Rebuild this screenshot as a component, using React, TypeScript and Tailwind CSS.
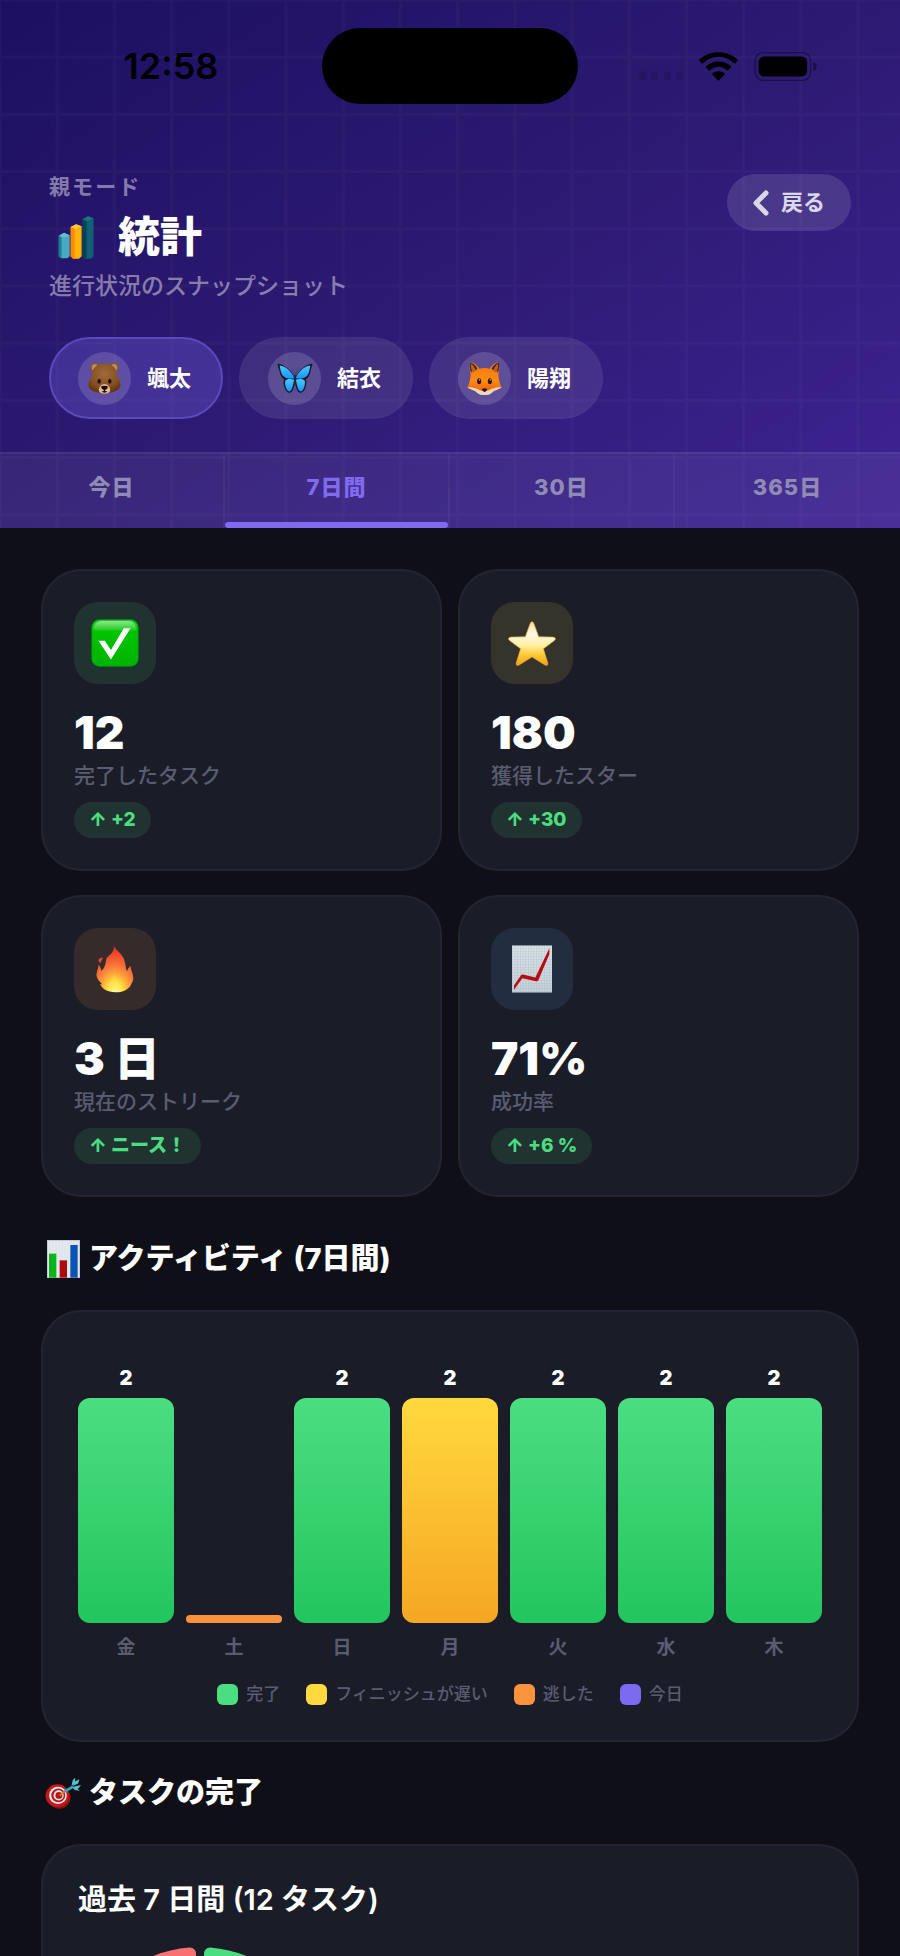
import React, { ReactNode, useState } from "react";

const Wifi = () => (
  <svg viewBox="0 0 117 86" className="h-[29px] w-[39px]" aria-hidden="true">
    <path d="M58.5 0C36 0 16 8 1 22q-2 2 0 4l7 7q2 2 4 0C25 21 41 14 58.5 14S92 21 105 33q2 2 4 0l7-7q2-2 0-4C101 8 81 0 58.5 0z" />
    <path d="M58.5 28C44 28 31 33 21 42q-2 2 0 4l8 8q2 2 4 0c7-6 16-10 25.500-10S77 48 84 54q2 2 4 0l8-8q2-2 0-4C86 33 73 28 58.5 28z" />
    <path d="M58.5 57c-7 0-13 2-17.500 6-2 2-2 3 0 5l15.500 16q2 2 4 0L76 68c2-2 2-3 0-5-4.500-4-10.500-6-17.500-6z" />
  </svg>
);

const Battery = () => (
  <svg viewBox="0 0 192 88" className="h-[29px] w-16" aria-hidden="true">
    <rect x="2" y="2" width="169" height="84" rx="25" fill="none" stroke="#000" strokeOpacity="0.4" strokeWidth="4" />
    <rect x="13" y="14" width="147" height="60" rx="16" />
    <path d="M179 30c6 2 10 8 10 14s-4 12-10 14z" fillOpacity="0.45" />
  </svg>
);

const Bars3d = () => (
  <svg viewBox="0 0 108 130" className="h-[43px] w-9" aria-hidden="true">
    <path d="M2 60l16-9 17 7v64l-7 6H8l-6-6z" fill="#49a8c4" />
    <path d="M2 60l8 4v64H8l-6-6z" fill="#16808c" />
    <path d="M2 60l16-9 17 7-15 8z" fill="#5fbcd2" />
    <path d="M38 33l16-8 17 6v91l-8 7H45l-7-7z" fill="#ffb30a" />
    <path d="M38 33l12 4v92h-5l-7-7z" fill="#fb8a06" />
    <path d="M38 33l16-8 17 6-19 8z" fill="#ffc53a" />
    <path d="M74 10l16-9 17 6v115l-8 7H81l-7-7z" fill="#126078" />
    <path d="M74 10l12 4v115h-5l-7-7z" fill="#0a4350" />
    <path d="M74 10l16-9 17 6-20 9z" fill="#1c7484" />
  </svg>
);

const Bear = () => (
  <svg viewBox="0 0 98 96" className="h-8 w-[33px]" aria-hidden="true">
    <defs>
      <radialGradient id="bear" cx="50%" cy="35%" r="65%">
        <stop offset="0" stopColor="#a06a3a" />
        <stop offset="0.7" stopColor="#855021" />
        <stop offset="1" stopColor="#643613" />
      </radialGradient>
    </defs>
    <circle cx="20" cy="16" r="14" fill="#8a5528" />
    <circle cx="78" cy="16" r="14" fill="#8a5528" />
    <circle cx="21" cy="17" r="10" fill="#c08f62" />
    <circle cx="77" cy="17" r="10" fill="#c08f62" />
    <path d="M49 4c23 0 36 14 38 33 1 10 10 20 10 31 0 17-21 25-48 25S1 85 1 68c0-11 9-21 10-31C13 18 26 4 49 4z" fill="url(#bear)" />
    <path d="M49 66c9 0 17 9 17 18 0 7-7 11-17 11s-17-4-17-11c0-9 8-18 17-18z" fill="#e3bd8a" />
    <ellipse cx="33" cy="58" rx="5" ry="7" fill="#1b0e06" />
    <ellipse cx="65" cy="58" rx="5" ry="7" fill="#1b0e06" />
    <path d="M39 75q0-4 10-4t10 4q0 6-8 9v3q4 2 7 0-3 5-9 5t-9-5q3 2 7 0v-3q-8-3-8-9z" fill="#180d0a" />
  </svg>
);

const Butterfly = () => (
  <svg viewBox="0 0 108 92" className="h-[31px] w-9" aria-hidden="true">
    <defs>
      <linearGradient id="wing" x1="0" y1="0" x2="0" y2="1">
        <stop offset="0" stopColor="#4fc6fc" />
        <stop offset="1" stopColor="#1496f4" />
      </linearGradient>
    </defs>
    <path d="M53 44C44 22 24 5 3 2c-3 1 2 12 4 20 3 14 6 22 15 27-3 5-3 10-1 18 2 10 6 20 16 22 8 0 13-12 16-26z" fill="#10192c" />
    <path d="M52 45C44 25 26 9 8 7c2 11 3 18 6 25 4 9 11 13 25 15z" fill="url(#wing)" />
    <path d="M51 49c-11-3-22-2-26 3-2 8 0 17 3 24 3 7 7 10 10 9 7-4 11-18 13-36z" fill="url(#wing)" />
    <path d="M55 44C64 22 84 5 105 2c3 1-2 12-4 20-3 14-6 22-15 27 3 5 3 10 1 18-2 10-6 20-16 22-8 0-13-12-16-26z" fill="#10192c" />
    <path d="M56 45C64 25 82 9 100 7c-2 11-3 18-6 25-4 9-11 13-25 15z" fill="url(#wing)" />
    <path d="M57 49c11-3 22-2 26 3 2 8 0 17-3 24-3 7-7 10-10 9-7-4-11-18-13-36z" fill="url(#wing)" />
    <path d="M53 34L45 12M55 34l8-22" stroke="#39405a" strokeWidth="1.5" />
    <ellipse cx="54" cy="49" rx="3" ry="16" fill="#1d2638" />
  </svg>
);

const Fox = () => (
  <svg viewBox="0 0 104 98" className="h-[33px] w-[35px]" aria-hidden="true">
    <defs>
      <linearGradient id="fox" x1="0" y1="0" x2="0" y2="1">
        <stop offset="0" stopColor="#ee7410" />
        <stop offset="0.55" stopColor="#ff8c0f" />
        <stop offset="1" stopColor="#e8560c" />
      </linearGradient>
    </defs>
    <path d="M11 0c11 3 20 10 26 20 9-3 21-3 30 0C73 10 82 3 93 0c4 13 4 26 0 37 1 14 4 27 10 39-9 6-22 8-29 15-6 7-14 7-22 7s-16 0-22-7C23 84 10 82 1 76c6-12 9-25 10-39C7 26 7 13 11 0z" fill="url(#fox)" />
    <path d="M10 1c9 4 16 10 21 19l-6 5C21 15 16 8 12 6c0 6 1 12 3 19l-3 8C8 22 8 11 10 1zM94 1c-9 4-16 10-21 19l6 5c4-10 9-17 13-19 0 6-1 12-3 19l3 8c4-11 4-22 2-32z" fill="#43291b" />
    <path d="M13 8c6 3 10 10 13 17l-9 7c-4-9-4-16-4-24zM91 8c-6 3-10 10-13 17l9 7c4-9 4-16 4-24z" fill="#b8602c" />
    <path d="M1 76c13-3 26 2 38 8 6 3 20 3 26 0 12-6 25-11 38-8-9 6-22 8-29 15-6 7-14 7-22 7s-16 0-22-7C23 84 10 82 1 76z" fill="#ead8c4" />
    <ellipse cx="36" cy="57" rx="6" ry="9" fill="#2a1008" />
    <ellipse cx="68" cy="57" rx="6" ry="9" fill="#2a1008" />
    <circle cx="37" cy="53" r="2" fill="#fff" />
    <circle cx="69" cy="53" r="2" fill="#fff" />
    <path d="M44 80q8-4 16 0-1 7-8 9-7-2-8-9z" fill="#2b1711" />
  </svg>
);

const Check = () => (
  <svg viewBox="0 0 142 142" className="size-12" aria-hidden="true">
    <defs>
      <linearGradient id="chk" x1="0" y1="0" x2="0" y2="1">
        <stop offset="0" stopColor="#2fd02f" />
        <stop offset="0.25" stopColor="#00c400" />
        <stop offset="1" stopColor="#00b400" />
      </linearGradient>
      <linearGradient id="gloss" x1="0" y1="0" x2="0" y2="1">
        <stop offset="0" stopColor="#8ce88c" />
        <stop offset="1" stopColor="#1fca1f" />
      </linearGradient>
    </defs>
    <rect x="1" y="1" width="140" height="140" rx="24" fill="#069a0b" />
    <rect x="4" y="4" width="134" height="134" rx="22" fill="url(#chk)" />
    <path d="M8 30Q10 6 34 6h74q24 0 26 24-2 4-14 4H22q-12 0-14-4z" fill="url(#gloss)" />
    <path d="M22 64h19l18 28 38-65h20L59 120z" fill="#fff" />
  </svg>
);

const Star = () => (
  <svg viewBox="0 0 142 134" className="h-[45px] w-12" aria-hidden="true">
    <defs>
      <linearGradient id="star" x1="0" y1="0" x2="0" y2="1">
        <stop offset="0" stopColor="#ffdf9a" />
        <stop offset="0.3" stopColor="#fff8e4" />
        <stop offset="0.55" stopColor="#fff0a0" />
        <stop offset="0.75" stopColor="#fdcb35" />
        <stop offset="1" stopColor="#f4a012" />
      </linearGradient>
    </defs>
    <path d="M71 2q4 0 6 7l14 38 42 1q7 1 8 5 0 3-6 7l-30 23 13 42q1 5-2 7-3 1-8-2l-37-23-37 23q-5 3-8 2-3-2-2-7l13-42L7 60q-6-4-6-7 1-4 8-5l42-1 14-38q2-7 6-7z" fill="url(#star)" stroke="#eaa044" strokeWidth="2" />
  </svg>
);

const Fire = () => (
  <svg viewBox="0 0 114 142" className="h-12 w-[38px]" aria-hidden="true">
    <defs>
      <radialGradient id="fire" cx="50%" cy="98%" r="88%">
        <stop offset="0" stopColor="#fffbb4" />
        <stop offset="0.2" stopColor="#ffe94a" />
        <stop offset="0.42" stopColor="#ffa93a" />
        <stop offset="0.66" stopColor="#f9713c" />
        <stop offset="1" stopColor="#ee3a24" />
      </radialGradient>
    </defs>
    <path d="M53 1c5 12 24 22 31 40 5 13 4 26 9 37 2-5 3-10 11-17-1 12 8 22 8 38 0 8-4 13-7 19-5 12-20 22-46 23-27-1-42-12-47-25 3 1 5 1 7 1C5 104 0 95 2 84c1-10 5-15 6-26 6 6 7 13 8 19 9-9 13-18 14-33C33 29 58 24 53 1z" fill="url(#fire)" />
    <path d="M18 36c5 6-3 9-4 17-8-4-8-10-4-13 3-1 6-2 8-4z" fill="#ee4530" />
    <path d="M56 82c-3 14-15 24-15 38 0 10 6 17 17 17 12 0 17-8 15-20-2-6-5-7-6-15-5 1-9-8-11-20z" fill="#ffe14a" fillOpacity="0.4" />
  </svg>
);

const Trend = () => (
  <svg viewBox="0 0 120 141" className="h-12 w-10" aria-hidden="true">
    <defs>
      <linearGradient id="sheet" x1="0" y1="0" x2="0" y2="1">
        <stop offset="0" stopColor="#dce4ea" />
        <stop offset="1" stopColor="#c6d0d8" />
      </linearGradient>
      <pattern id="paper" width="8" height="8" patternUnits="userSpaceOnUse">
        <path d="M0 0h8M0 0v8" stroke="#9fadb9" strokeWidth="1.5" />
      </pattern>
    </defs>
    <rect width="120" height="141" fill="url(#sheet)" />
    <rect width="120" height="141" fill="url(#paper)" />
    <path d="M6 120l22-32q2-2 5-1l37 9L112 8v18L79 104q-2 4-7 3l-41-9L6 133z" fill="#b40d12" />
  </svg>
);

const BarChart = () => (
  <svg viewBox="0 0 99 114" className="h-[38px] w-[33px]" aria-hidden="true">
    <rect width="99" height="114" fill="#e3e9ef" />
    <path d="M9 0v114M18 0v114M27 0v114M36 0v114M45 0v114M54 0v114M63 0v114M72 0v114M81 0v114M90 0v114" stroke="#cdd6de" strokeWidth="1" />
    <rect x="1" y="1" width="97" height="112" fill="none" stroke="#b3bdc6" strokeWidth="2" />
    <rect x="6" y="41" width="22" height="72" fill="#0ab41c" />
    <rect x="38" y="61" width="22" height="52" fill="#ac0c10" />
    <rect x="70" y="15" width="22" height="98" fill="#0a55b4" />
  </svg>
);

const Target = () => (
  <svg viewBox="0 0 114 100" className="h-[33px] w-[38px]" aria-hidden="true">
    <ellipse cx="44" cy="61" rx="36" ry="38" fill="#8f1115" transform="rotate(-35 44 61)" />
    <ellipse cx="39" cy="57" rx="37" ry="36" fill="#c8171b" />
    <ellipse cx="41" cy="56" rx="28" ry="27" fill="#f4ecec" />
    <ellipse cx="42" cy="56" rx="22" ry="22" fill="#b9151a" />
    <ellipse cx="43" cy="56" rx="16" ry="16" fill="#f4ecec" />
    <ellipse cx="44" cy="56" rx="11" ry="11" fill="#b9151a" />
    <path d="M48 55l14-11" stroke="#c98a1b" strokeWidth="5" strokeLinecap="round" />
    <path d="M59 41l28-17 5 8-27 15q-8 1-6-6z" fill="#2ba7bf" />
    <path d="M84 25l4-18 8-7-2 18zM88 26l6-14 15-7-4 13zM90 29l24-6-9 12-15-2zM88 31l14 3 8 8-17-4z" fill="#55bfd0" />
  </svg>
);

interface Child {
  name: string;
  avatar: ReactNode;
}

const kids: Child[] = [
  { name: "颯太", avatar: <Bear /> },
  { name: "結衣", avatar: <Butterfly /> },
  { name: "陽翔", avatar: <Fox /> },
];

const periods = ["今日", "7日間", "30日", "365日"];

interface StatCardProps {
  icon: ReactNode;
  iconClass: string;
  value: string;
  label: string;
  delta: string;
}

const stats: StatCardProps[] = [
  { icon: <Check />, iconClass: "bg-[#203330]", value: "12", label: "完了したタスク", delta: "+2" },
  { icon: <Star />, iconClass: "bg-[#35342a]", value: "180", label: "獲得したスター", delta: "+30" },
  { icon: <Fire />, iconClass: "bg-[#352b2a]", value: "3 日", label: "現在のストリーク", delta: "ニース！" },
  { icon: <Trend />, iconClass: "bg-[#222e40]", value: "71%", label: "成功率", delta: "+6 %" },
];

const barColors = {
  done: "bg-linear-to-b from-[#4ade80] to-[#22c55e]",
  late: "bg-linear-to-b from-[#ffd93d] to-[#f5a623]",
  missed: "bg-[#fb923c]",
};

type DayType = {
  day: string;
  count: number;
  status: keyof typeof barColors;
};

const days: DayType[] = [
  { day: "金", count: 2, status: "done" },
  { day: "土", count: 0, status: "missed" },
  { day: "日", count: 2, status: "done" },
  { day: "月", count: 2, status: "late" },
  { day: "火", count: 2, status: "done" },
  { day: "水", count: 2, status: "done" },
  { day: "木", count: 2, status: "done" },
];

const legend = [
  { label: "完了", color: "bg-[#4ade80]" },
  { label: "フィニッシュが遅い", color: "bg-[#ffd93d]" },
  { label: "逃した", color: "bg-[#fb923c]" },
  { label: "今日", color: "bg-[#7c6af0]" },
];

const MAX_BAR = 225;

function StatCard({ icon, iconClass, value, label, delta }: StatCardProps) {
  return (
    <article className="flex flex-col items-start rounded-[40px] border-2 border-white/4 bg-[#1a1d27] p-[31px]">
      <div className={`flex size-[82px] items-center justify-center rounded-3xl ${iconClass}`}>
        {icon}
      </div>
      <p className="mt-5 text-[46px] leading-[56px] font-black text-white">{value}</p>
      <p className="mt-0.5 text-[21px] leading-7 font-medium text-[#5a5c72]">{label}</p>
      <p className="mt-3 rounded-full bg-[#203330] px-[15px] text-[19px] leading-9 font-extrabold text-[#4ade80]">
        ↑ {delta}
      </p>
    </article>
  );
}

function SectionTitle({ icon, children }: { icon: ReactNode; children: ReactNode }) {
  return (
    <h2 className="my-[30px] flex items-center gap-2 px-1 text-[29px] leading-[42px] font-extrabold text-white">
      <span className="flex w-9 justify-center">{icon}</span>
      {children}
    </h2>
  );
}

export default function App() {
  const [child, setChild] = useState(0);
  const [period, setPeriod] = useState(1);

  return (
    <div className="flex h-screen flex-col overflow-hidden bg-[#0f1017] font-['Inter','Noto_Sans_CJK_JP',sans-serif]">
      <header className="relative isolate shrink-0 bg-linear-to-br from-[#1c0f62] via-[#2d1a72] to-[#3e2394]">
        <svg className="absolute inset-0 -z-10 size-full" aria-hidden="true">
          <defs>
            <pattern id="grid" x="-1.5" y="-1.5" width="57.2" height="57.2" patternUnits="userSpaceOnUse">
              <path d="M0 1.5h57.2M1.5 0v57.2" stroke="#fff" strokeOpacity="0.025" strokeWidth="3" />
            </pattern>
          </defs>
          <rect width="100%" height="100%" fill="url(#grid)" />
        </svg>

        <div className="grid grid-cols-[1fr_256px_1fr] items-center pt-7">
          <time className="pl-5 text-center text-4xl leading-[76px] font-semibold text-black">12:58</time>
          <div className="h-[76px] rounded-full bg-black" />
          <div className="flex items-center justify-end gap-4 pr-[82px]">
            <svg viewBox="0 0 44 10" className="mt-5 h-[10px] w-11" aria-hidden="true">
              <g fillOpacity="0.12">
                <rect x="0" width="7" height="9" rx="3" />
                <rect x="12" width="7" height="9" rx="3" />
                <rect x="25" width="7" height="9" rx="3" />
                <rect x="37" width="7" height="9" rx="3" />
              </g>
            </svg>
            <Wifi />
            <Battery />
          </div>
        </div>

        <div className="flex items-start justify-between px-[49px] pt-[70px]">
          <div>
            <p className="text-[21px] leading-[26px] font-semibold tracking-widest text-white/45">親モード</p>
            <h1 className="flex items-center gap-4 pt-1 text-[42px] leading-[66px] font-black text-white">
              <span className="flex w-[53px] justify-center">
                <Bars3d />
              </span>
              統計
            </h1>
            <p className="text-[23px] leading-8 font-medium text-white/45">進行状況のスナップショット</p>
          </div>
          <button
            type="button"
            className="flex h-[57px] items-center gap-3 rounded-full bg-white/12 pr-[26px] pl-[26px] text-[22px] font-bold text-white/80"
          >
            <svg viewBox="0 0 16 26" className="h-[26px] w-4" fill="none" stroke="currentColor" strokeWidth="5" strokeLinecap="round" strokeLinejoin="round" aria-hidden="true">
              <path d="M13 3L3 13l10 10" />
            </svg>
            戻る
          </button>
        </div>

        <div className="flex gap-4 px-[49px] pt-[35px] pb-[33px]">
          {kids.map((kid, i) => (
            <button
              key={kid.name}
              type="button"
              aria-pressed={i === child}
              onClick={() => setChild(i)}
              className={`flex h-[82px] items-center gap-4 rounded-full border-2 pr-[30px] pl-[27px] text-[22px] font-bold text-white ${
                i === child ? "border-[#5c49bd] bg-[#7c6af0]/30" : "border-white/1 bg-white/9"
              }`}
            >
              <span className="flex size-[53px] items-center justify-center rounded-full bg-white/15">
                {kid.avatar}
              </span>
              {kid.name}
            </button>
          ))}
        </div>

        <nav className="grid grid-cols-4 border-t-2 border-white/6 bg-white/6">
          {periods.map((p, i) => (
            <button
              key={p}
              type="button"
              aria-pressed={i === period}
              onClick={() => setPeriod(i)}
              className={`relative h-[74px] border-r-2 border-white/4 pb-2 text-[22px] font-extrabold tracking-wider last:border-r-0 ${
                i === period ? "text-[#7f6af0]" : "text-[#8f8bb4]"
              }`}
            >
              {p}
              {i === period && (
                <span className="absolute inset-x-0 bottom-0 h-1.5 rounded-full bg-[#7f6af0]" />
              )}
            </button>
          ))}
        </nav>
      </header>

      <main className="grow overflow-y-auto px-[41px] pt-[41px] [scrollbar-width:none]">
        <section className="grid grid-cols-2 gap-x-4 gap-y-6 pb-[11px]">
          {stats.map((stat) => (
            <StatCard key={stat.label} {...stat} />
          ))}
        </section>

        <SectionTitle icon={<BarChart />}>アクティビティ (7日間)</SectionTitle>
        <section className="rounded-[40px] border-2 border-white/4 bg-[#1a1d27] px-[35px] pt-[52px] pb-[35px]">
          <div className="flex items-end gap-3">
            {days.map((d) => (
              <div key={d.day} className="flex flex-1 flex-col items-center">
                {d.count > 0 && (
                  <span className="pb-1.5 text-xl leading-7 font-black text-white">{d.count}</span>
                )}
                <div
                  className={`w-full rounded-xl ${barColors[d.status]}`}
                  style={{ height: d.count > 0 ? (d.count / 2) * MAX_BAR : 8 }}
                />
                <span className="pt-[11px] text-[19px] leading-7 font-bold text-[#5a5c72]">{d.day}</span>
              </div>
            ))}
          </div>
          <ul className="mt-[22px] flex justify-center gap-[26px]">
            {legend.map((l) => (
              <li key={l.label} className="flex items-center gap-2 text-[17px] leading-[21px] font-medium text-[#5a5c72]">
                <span className={`size-[21px] rounded-md ${l.color}`} />
                {l.label}
              </li>
            ))}
          </ul>
        </section>

        <SectionTitle icon={<Target />}>タスクの完了</SectionTitle>
        <section className="rounded-[40px] border-2 border-white/4 bg-[#1a1d27] px-[35px] py-[33px]">
          <h3 className="text-[29px] leading-[42px] font-semibold text-white">過去 7 日間 (12 タスク)</h3>
          <svg viewBox="0 0 254 254" className="mt-[26px] -ml-[5px] size-[254px]" aria-hidden="true">
            <g strokeWidth="12" strokeLinejoin="round">
              <path d="M137 6.5A121 121 0 1 1 12 88L58 103A73 73 0 1 0 137 55z" fill="#4ade80" stroke="#4ade80" />
              <path d="M117 6.5A121 121 0 0 0 17 76L63 91A73 73 0 0 1 117 55z" fill="#f87171" stroke="#f87171" />
            </g>
          </svg>
        </section>
      </main>
    </div>
  );
}
